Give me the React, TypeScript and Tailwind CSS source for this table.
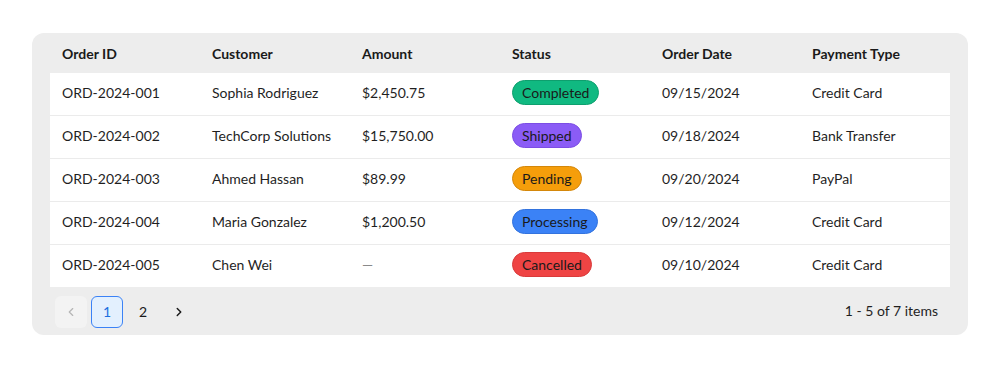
import { ChevronLeft, ChevronRight } from "lucide-react";

type Order = {
  id: string;
  customer: string;
  amount: string | null;
  status: "Completed" | "Shipped" | "Pending" | "Processing" | "Cancelled";
  date: string;
  payment: string;
};

const orders: Order[] = [
  { id: "ORD-2024-001", customer: "Sophia Rodriguez", amount: "$2,450.75", status: "Completed", date: "09/15/2024", payment: "Credit Card" },
  { id: "ORD-2024-002", customer: "TechCorp Solutions", amount: "$15,750.00", status: "Shipped", date: "09/18/2024", payment: "Bank Transfer" },
  { id: "ORD-2024-003", customer: "Ahmed Hassan", amount: "$89.99", status: "Pending", date: "09/20/2024", payment: "PayPal" },
  { id: "ORD-2024-004", customer: "Maria Gonzalez", amount: "$1,200.50", status: "Processing", date: "09/12/2024", payment: "Credit Card" },
  { id: "ORD-2024-005", customer: "Chen Wei", amount: null, status: "Cancelled", date: "09/10/2024", payment: "Credit Card" },
];

const statusStyles: Record<Order["status"], string> = {
  Completed: "bg-[#10b981] border-[#0e9f6e]",
  Shipped: "bg-[#8b5cf6] border-[#7c4ee4]",
  Pending: "bg-[#f59e0b] border-[#d4870a]",
  Processing: "bg-[#3b82f6] border-[#3373de]",
  Cancelled: "bg-[#ef4444] border-[#d93b3b]",
};

const headers = ["Order ID", "Customer", "Amount", "Status", "Order Date", "Payment Type"];

export default function App() {
  return (
    <div className="w-[1000px] h-[368px] bg-white pt-[33px] px-8 font-['Lato','Noto_Sans',sans-serif] text-[14px] text-[#1f1f1f]">
      <div className="bg-[#ededed] rounded-xl px-[18px] pb-[7px]">
        {/* header */}
        <div className="grid grid-cols-6 h-10 items-center">
          {headers.map((h) => (
            <div key={h} className="px-3 font-bold text-[#1a1a1a]">
              {h}
            </div>
          ))}
        </div>

        {/* rows */}
        <div className="bg-white">
          {orders.map((o, i) => {
            const last = i === orders.length - 1;
            return (
              <div
                key={o.id}
                className={`grid grid-cols-6 items-center pb-1 ${last ? "h-[42px]" : "h-[43px] border-b border-[#ebebeb]"}`}
              >
                <div className="px-3">{o.id}</div>
                <div className="px-3">{o.customer}</div>
                <div className="px-3">{o.amount ?? <span className="text-[#8a8a8a]">—</span>}</div>
                <div className="px-3">
                  <span
                    className={`inline-flex items-center h-[25px] px-[9px] rounded-full border text-[14px] text-[#1a1a1a] ${statusStyles[o.status]}`}
                  >
                    {o.status}
                  </span>
                </div>
                <div className="px-3">{o.date}</div>
                <div className="px-3">{o.payment}</div>
              </div>
            );
          })}
        </div>

        {/* footer */}
        <div className="flex items-center justify-between pt-[9px] pl-[5px] pr-3">
          <div className="flex items-center gap-1">
            <button className="w-8 h-8 rounded-md bg-[#f3f3f3] flex items-center justify-center text-[#b5b5b5]">
              <ChevronLeft size={14} strokeWidth={2} />
            </button>
            <button className="w-8 h-8 rounded-md bg-[#e3f0fe] border border-[#3b82f6] flex items-center justify-center text-[#1d6fe0] pb-[2px]">
              1
            </button>
            <button className="w-8 h-8 rounded-md flex items-center justify-center text-[#1a1a1a] pb-[2px]">2</button>
            <button className="w-8 h-8 rounded-md flex items-center justify-center text-[#1a1a1a]">
              <ChevronRight size={14} strokeWidth={2.5} />
            </button>
          </div>
          <div className="text-[#1f1f1f] mb-[3px]">1 - 5 of 7 items</div>
        </div>
      </div>
    </div>
  );
}
